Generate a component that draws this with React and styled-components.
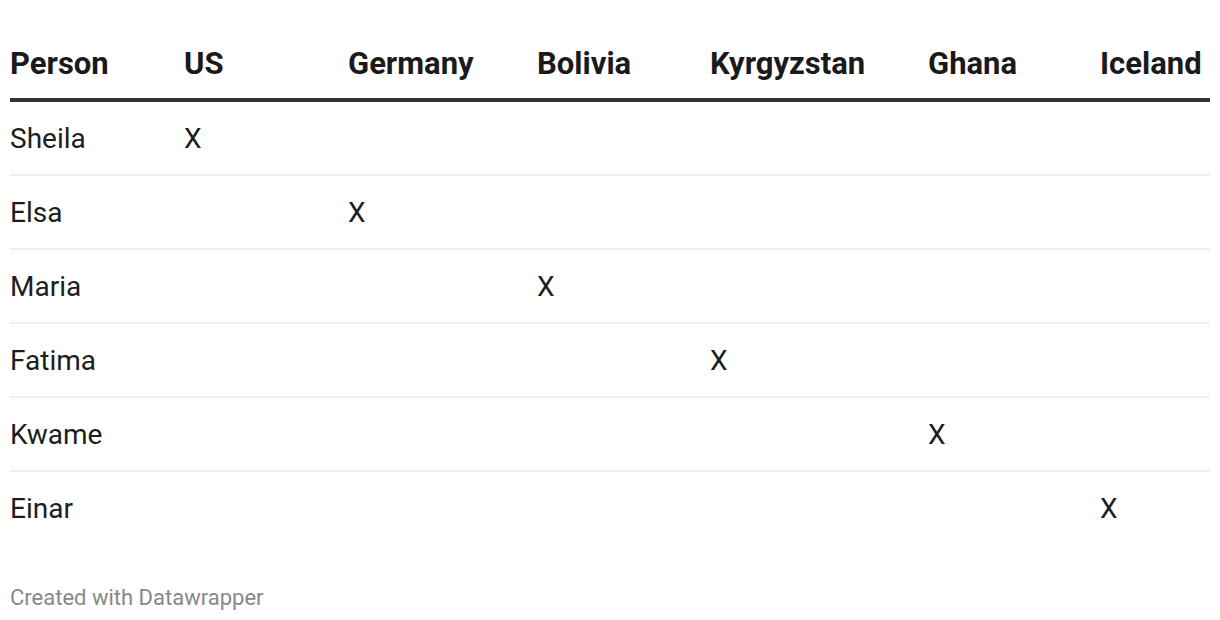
import React from "react";
import styled, { createGlobalStyle } from "styled-components";

const GlobalStyle = createGlobalStyle`
  html, body {
    margin: 0;
    padding: 0;
    background: #ffffff;
  }
  body {
    font-family: Roboto, "Liberation Sans", Arial, sans-serif;
    color: #1d1d1d;
  }
`;

const COLS = "174px 164px 189px 173px 218px 172px 110px";

const Wrapper = styled.div`
  padding: 46px 10px 0 10px;
  width: 1200px;
`;

const HeaderRow = styled.div`
  display: grid;
  grid-template-columns: ${COLS};
  align-items: end;
  padding-bottom: 16px;
  border-bottom: 4px solid #333333;
`;

const HeadCell = styled.div`
  font-size: 31px;
  line-height: 36px;
  font-weight: 700;
  color: #1a1a1a;
  white-space: nowrap;
  text-align: ${(p) => (p.$right ? "right" : "left")};
  padding-right: ${(p) => (p.$right ? "10px" : "0")};
`;

const Row = styled.div`
  display: grid;
  grid-template-columns: ${COLS};
  align-items: center;
  height: 72px;
  border-bottom: ${(p) => (p.$last ? "none" : "2px solid #eeeeee")};
`;

const Cell = styled.div`
  font-size: 28px;
  line-height: 34px;
  padding-top: 2px;
  color: #1d1d1d;
  white-space: nowrap;
`;

const Footer = styled.div`
  margin-top: 40px;
  font-size: 22px;
  line-height: 28px;
  color: #888888;
`;

const countries = ["US", "Germany", "Bolivia", "Kyrgyzstan", "Ghana", "Iceland"];
const people = ["Sheila", "Elsa", "Maria", "Fatima", "Kwame", "Einar"];

export default function App() {
  return (
    <>
      <GlobalStyle />
      <Wrapper>
        <HeaderRow>
          <HeadCell>Person</HeadCell>
          {countries.map((c, i) => (
            <HeadCell key={c} $right={i === countries.length - 1}>
              {c}
            </HeadCell>
          ))}
        </HeaderRow>
        {people.map((name, r) => (
          <Row key={name} $last={r === people.length - 1}>
            <Cell>{name}</Cell>
            {countries.map((c, i) => (
              <Cell key={c}>{i === r ? "X" : ""}</Cell>
            ))}
          </Row>
        ))}
        <Footer>Created with Datawrapper</Footer>
      </Wrapper>
    </>
  );
}
